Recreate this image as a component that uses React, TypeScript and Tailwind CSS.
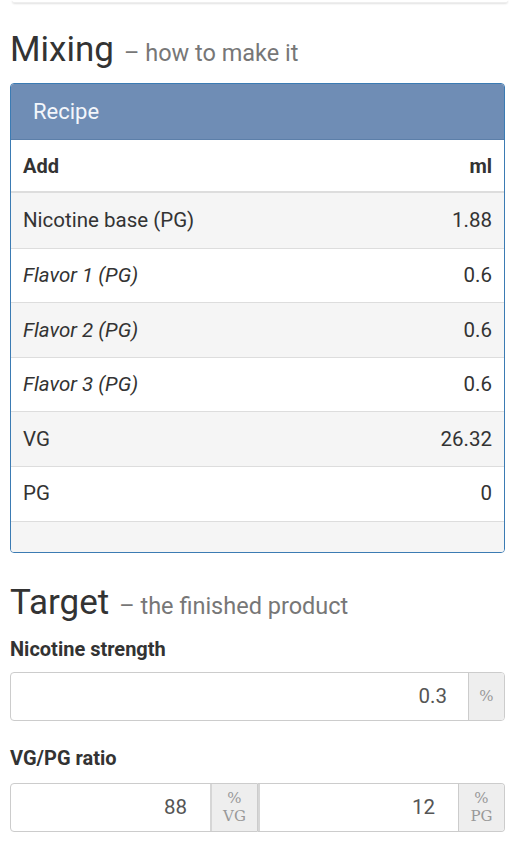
import React from "react"

const rows = [
  { name: "Nicotine base (PG)", ml: "1.88", italic: false },
  { name: "Flavor 1 (PG)", ml: "0.6", italic: true },
  { name: "Flavor 2 (PG)", ml: "0.6", italic: true },
  { name: "Flavor 3 (PG)", ml: "0.6", italic: true },
  { name: "VG", ml: "26.32", italic: false },
  { name: "PG", ml: "0", italic: false },
]

function Addon({ top, bottom, className = "" }: { top: string; bottom?: string; className?: string }) {
  return (
    <div
      className={`flex flex-col items-center justify-center bg-[#eeeeee] text-[#999] text-[15px] leading-[18px] ${className}`}
      style={{ fontFamily: '"DejaVu Serif", "Liberation Serif", serif' }}
    >
      <span>{top}</span>
      {bottom && <span>{bottom}</span>}
    </div>
  )
}

export default function App() {
  return (
    <main className="min-h-screen bg-white text-[#333] pl-[10px] pr-[15px]" style={{ fontFamily: 'Roboto, "Liberation Sans", sans-serif' }}>
      {/* bottom edge of the card above */}
      <div className="h-[3px] mx-[2px] -mr-[3px] bg-white rounded-b shadow-[0_1px_2px_rgba(0,0,0,0.12)] border-b border-[#eee]"></div>

      <h1 className="mt-[29px] flex items-baseline gap-[10px] leading-none">
        <span className="text-[35px] text-[#333]">Mixing</span>
        <span className="text-[23.5px] text-[#777]">– how to make it</span>
      </h1>

      {/* Recipe panel */}
      <section className="mt-[16px] border border-[#3b7bb3] rounded-[4px] overflow-hidden">
        <div className="h-[56px] bg-[#6f8db5] text-[#f3f6fb] text-[22px] flex items-center pl-[22px] border-b border-[#5c7fa9]">
          Recipe
        </div>
        <div className="flex justify-between items-center h-[53px] px-[12px] text-[20px] font-bold border-b-2 border-[#dddddd]">
          <span>Add</span>
          <span>ml</span>
        </div>
        {rows.map((r, i) => (
          <div
            key={r.name}
            className={`flex justify-between items-center h-[54.6px] px-[12px] text-[20.5px] ${i > 0 ? "border-t border-[#dddddd]" : ""} ${i % 2 === 0 ? "bg-[#f5f5f5]" : "bg-white"}`}
          >
            <span className={r.italic ? "italic" : ""}>{r.name}</span>
            <span>{r.ml}</span>
          </div>
        ))}
        <div className="h-[31px] bg-[#f5f5f5] border-t border-[#dddddd]"></div>
      </section>

      <h1 className="mt-[32px] flex items-baseline gap-[10px] leading-none">
        <span className="text-[35px] text-[#333]">Target</span>
        <span className="text-[23.5px] text-[#777]">– the finished product</span>
      </h1>

      <label className="block mt-[14px] text-[20px] font-bold text-[#333]">Nicotine strength</label>
      <div className="mt-[8px] flex h-[49px] border border-[#cccccc] rounded-[4px] overflow-hidden">
        <div className="flex-1 flex items-center justify-end pr-[21px] text-[20.5px] text-[#555]">0.3</div>
        <Addon top="%" className="w-[36px] border-l border-[#cccccc]" />
      </div>

      <label className="block mt-[22px] text-[20px] font-bold text-[#333]">VG/PG ratio</label>
      <div className="mt-[10px] flex h-[49px]">
        <div className="flex-1 flex border border-[#cccccc] rounded-l-[4px] overflow-hidden">
          <div className="flex-1 flex items-center justify-end pr-[23px] text-[20.5px] text-[#555]">88</div>
          <Addon top="%" bottom="VG" className="w-[47px] border-l-2 border-[#d6d6d6]" />
        </div>
        <div className="flex-1 flex border border-l-0 border-[#cccccc] rounded-r-[4px] overflow-hidden">
          <div className="flex-1 flex items-center justify-end pr-[23px] text-[20.5px] text-[#555] border-l-2 border-[#d6d6d6]">12</div>
          <Addon top="%" bottom="PG" className="w-[46px] border-l border-[#cccccc]" />
        </div>
      </div>
    </main>
  )
}
